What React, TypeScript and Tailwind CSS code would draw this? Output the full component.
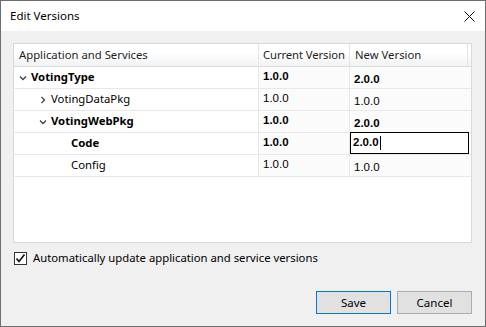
import React from 'react';

const ui = { fontFamily: '"Noto Sans", "Open Sans", sans-serif' };
const num = { fontFamily: '"Liberation Sans", Arial, sans-serif' };

type Row = {
  name: string;
  level: number;
  chevron?: 'down' | 'right';
  bold?: boolean;
  current: string;
  next: string;
  editing?: boolean;
};

const rows: Row[] = [
  { name: 'VotingType', level: 0, chevron: 'down', bold: true, current: '1.0.0', next: '2.0.0' },
  { name: 'VotingDataPkg', level: 1, chevron: 'right', current: '1.0.0', next: '1.0.0' },
  { name: 'VotingWebPkg', level: 1, chevron: 'down', bold: true, current: '1.0.0', next: '2.0.0' },
  { name: 'Code', level: 2, bold: true, current: '1.0.0', next: '2.0.0', editing: true },
  { name: 'Config', level: 2, current: '1.0.0', next: '1.0.0' },
];

const Chevron = ({ dir }: { dir: 'down' | 'right' }) => (
  <svg width="8" height="8" viewBox="0 0 8 8" className="shrink-0">
    {dir === 'down' ? (
      <path d="M1 2.5 L4 5.5 L7 2.5" fill="none" stroke="#404040" strokeWidth="1.3" />
    ) : (
      <path d="M2.5 1 L5.5 4 L2.5 7" fill="none" stroke="#404040" strokeWidth="1.3" />
    )}
  </svg>
);

const App: React.FC = () => {
  return (
    <div className="w-[486px] h-[327px] border border-[#6e6e6e] flex flex-col text-black" style={ui}>
      {/* title bar */}
      <div className="h-[30px] bg-white flex items-center justify-between pl-[9px] pr-[10px]">
        <span className="text-[11.5px]">Edit Versions</span>
        <svg width="11" height="11" viewBox="0 0 11 11">
          <path d="M0.5 0.5 L10.5 10.5 M10.5 0.5 L0.5 10.5" stroke="#111" strokeWidth="1" />
        </svg>
      </div>

      <div className="flex-1 bg-[#f0f0f0] pl-[12px] pt-[12px] flex flex-col">
        {/* grid */}
        <div className="w-[459px] h-[200px] border border-[#d9d9d9] bg-white flex flex-col">
          <div className="grid grid-cols-[245px_91px_1fr] h-[23px] border-b border-[#dcdcdc] bg-gradient-to-b from-white from-40% to-[#f1f2f4] text-[11.3px] text-[#1e1e1e] whitespace-nowrap">
            <div className="pl-[5px] flex items-center border-r border-[#e4e4e4]">Application and Services</div>
            <div className="pl-[4px] flex items-center border-r border-[#e4e4e4] tracking-[-0.1px]">Current Version</div>
            <div className="pl-[5px] flex items-center mr-[3px] border-r border-[#e4e4e4]">New Version</div>
          </div>
          {rows.map((r) => (
            <div key={r.name} className="grid grid-cols-[245px_91px_1fr] h-[22px] border-b border-[#e8e8e8]">
              <div
                className={`flex items-center gap-[4px] border-r border-[#e8e8e8] text-[11.3px] whitespace-nowrap ${r.bold ? 'font-bold' : ''}`}
                style={{ paddingLeft: 5 + r.level * 20 }}
              >
                {r.chevron ? <Chevron dir={r.chevron} /> : <span className="w-[8px]" />}
                <span>{r.name}</span>
              </div>
              <div
                className={`pl-[4px] pt-[1px] border-r border-[#e8e8e8] bg-[#fbfbfb] text-[11.5px] ${r.bold ? 'font-bold' : ''}`}
                style={num}
              >
                {r.current}
              </div>
              {r.editing ? (
                <div className="bg-white border border-black mr-[2px] -mt-px h-[22px] flex items-center pl-[2px] text-[11.5px] font-bold" style={num}>
                  {r.next}
                  <span className="inline-block w-px h-[14px] bg-black ml-px" />
                </div>
              ) : (
                <div className={`pl-[4px] pt-[4px] bg-[#fbfbfb] text-[11.5px] ${r.bold ? 'font-bold' : ''}`} style={num}>
                  {r.next}
                </div>
              )}
            </div>
          ))}
          <div className="flex-1" />
        </div>

        {/* checkbox */}
        <label className="flex items-center mt-[8px] ml-[1px] h-[15px] gap-[6px]">
          <span className="w-[13px] h-[13px] border border-[#333] bg-white flex items-center justify-center">
            <svg width="11" height="11" viewBox="0 0 11 11">
              <path d="M1.5 5.5 L4 8.5 L9.5 1.5" fill="none" stroke="#111" strokeWidth="1.6" />
            </svg>
          </span>
          <span className="text-[11.3px] whitespace-nowrap">Automatically update application and service versions</span>
        </label>

        {/* buttons */}
        <div className="flex justify-end gap-[6px] mt-[25px] pr-[13px]">
          <button className="w-[75px] h-[23px] border border-[#0078d7] bg-[#e1e1e1] text-[11.5px]">Save</button>
          <button className="w-[75px] h-[23px] border border-[#adadad] bg-[#e1e1e1] text-[11.5px]">Cancel</button>
        </div>
      </div>
    </div>
  );
};

export default App;
